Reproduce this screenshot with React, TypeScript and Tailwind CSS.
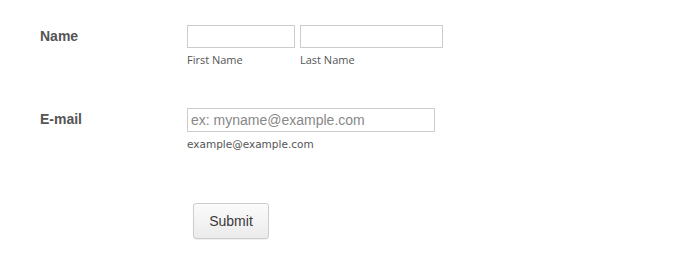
export default function App() {
  return (
    <div className="w-[692px] h-[276px] bg-white pl-[40px] pt-[25px] font-['Liberation_Sans',Arial,sans-serif]">
      {/* name */}
      <div className="flex">
        <label className="w-[147px] pt-[1px] text-[14px] font-bold text-[#555]">Name</label>
        <div className="flex gap-[5px]">
          <div className="flex flex-col">
            <input type="text" className="w-[108px] h-[23px] border border-[#ccc] bg-white outline-none" />
            <span className="mt-[5px] text-[11px] leading-[14px] text-[#555] font-['Open_Sans',sans-serif]">First Name</span>
          </div>
          <div className="flex flex-col">
            <input type="text" className="w-[143px] h-[23px] border border-[#ccc] bg-white outline-none" />
            <span className="mt-[5px] text-[11px] leading-[14px] text-[#555] font-['Open_Sans',sans-serif]">Last Name</span>
          </div>
        </div>
      </div>

      {/* email */}
      <div className="flex mt-[41px]">
        <label className="w-[147px] pt-[1px] text-[14px] font-bold text-[#555]">E-mail</label>
        <div className="flex flex-col">
          <input
            type="email"
            placeholder="ex: myname@example.com"
            className="w-[248px] h-[24px] border border-[#ccc] bg-white px-[3px] text-[14px] outline-none placeholder:text-[#888]"
          />
          <span className="mt-[5px] text-[10.5px] leading-[14px] text-[#555] font-['DejaVu_Sans',sans-serif]">example@example.com</span>
        </div>
      </div>

      {/* submit */}
      <div className="pl-[153px] mt-[52px]">
        <button className="w-[76px] h-[36px] rounded-[3px] border border-[#ccc] bg-gradient-to-b from-[#fbfbfb] to-[#ebebeb] text-[14px] text-[#3a3a3a] shadow-[0_1px_1px_rgba(0,0,0,0.06)]">
          Submit
        </button>
      </div>
    </div>
  );
}
